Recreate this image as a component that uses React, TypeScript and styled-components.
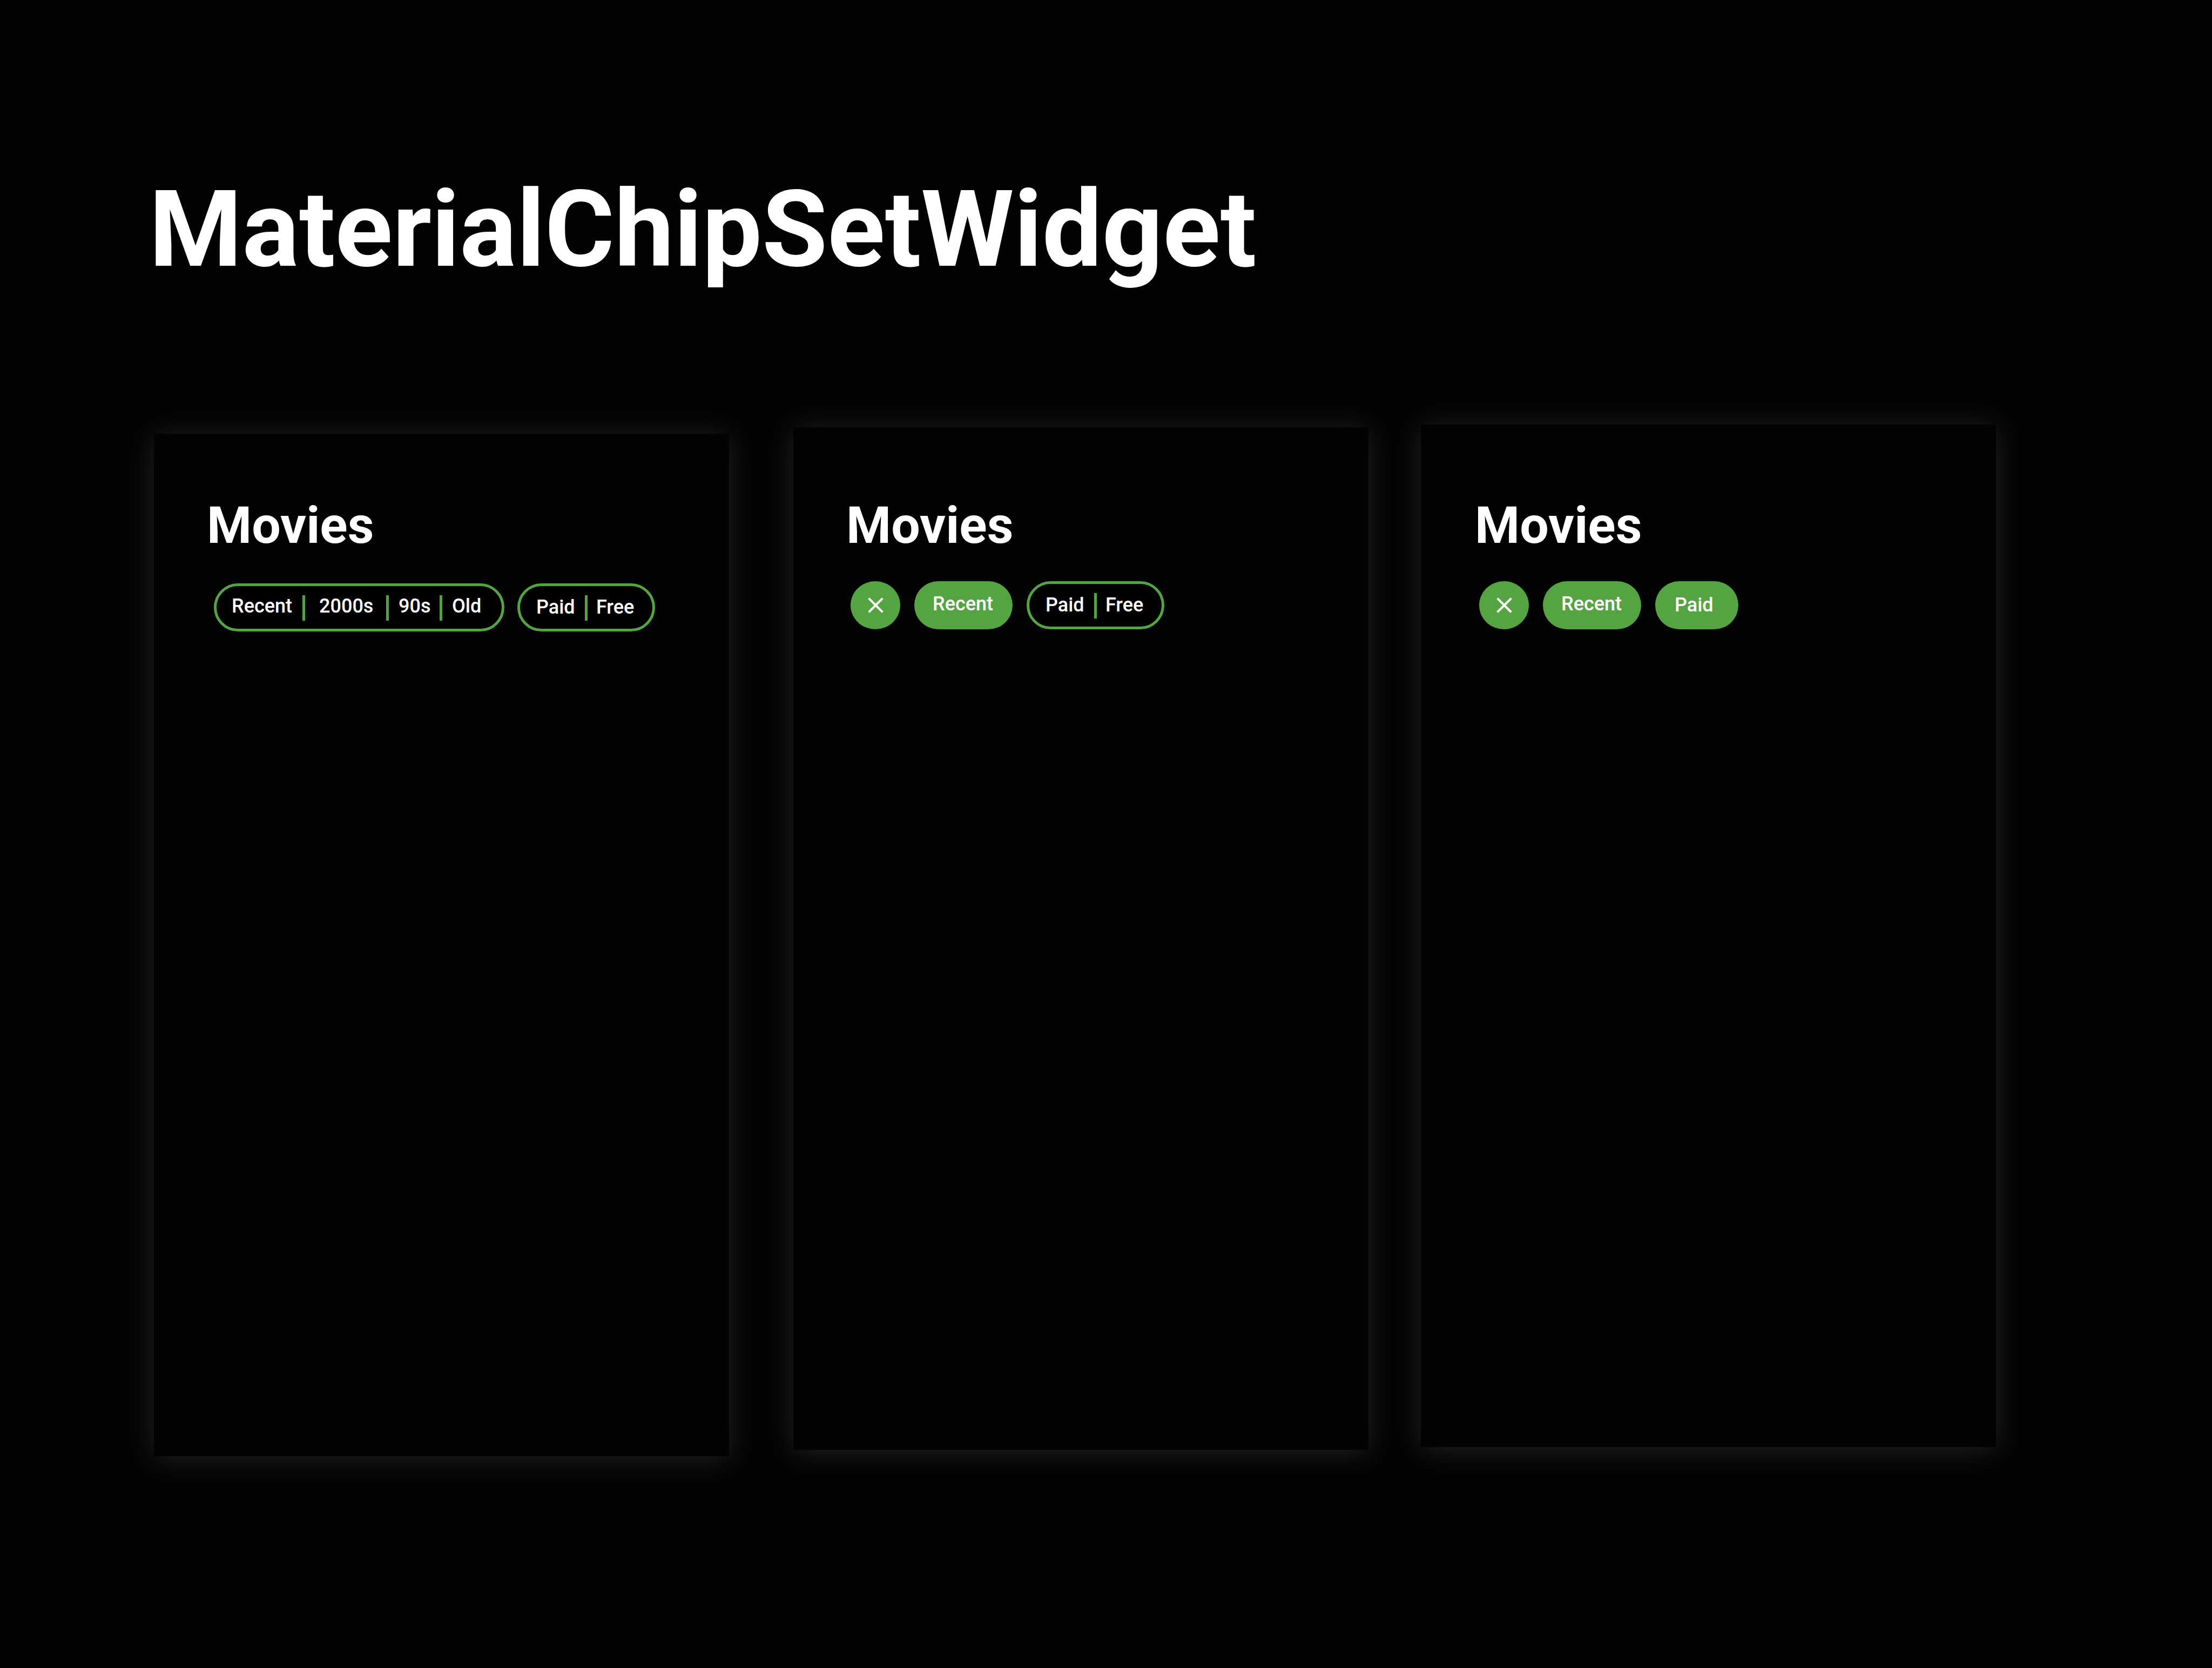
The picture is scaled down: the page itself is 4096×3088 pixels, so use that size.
import React from "react";
import styled, { createGlobalStyle } from "styled-components";

const GREEN = "#55a442";
const BACKDROP = "#030303";

const GlobalStyle = createGlobalStyle`
  *, *::before, *::after { box-sizing: border-box; }
  body {
    margin: 0;
    background: ${BACKDROP};
    color: #fff;
    font-family: Roboto, "Noto Sans", sans-serif;
  }
`;

const Page = styled.main`
  min-height: 100vh;
  padding: 326px 400px 160px 276px;
  background: ${BACKDROP};
`;

const PageTitle = styled.h1`
  margin: 0 0 280px;
  font-size: 197px;
  line-height: 197px;
  font-weight: 700;
`;

const Screens = styled.div`
  display: flex;
  align-items: flex-start;
  padding-left: 9px;
`;

/* $lift raises the frame of a screen while its content stays on the shared line. */
const Screen = styled.section<{ $lift: number; $gap: number }>`
  flex: 1 1 0;
  min-width: 0;
  aspect-ratio: 9 / 16;
  margin-top: ${(p) => -p.$lift}px;
  margin-left: ${(p) => p.$gap}px;
  background: ${BACKDROP};
  box-shadow: 0 4px 50px rgba(255, 255, 255, 0.13);
`;

const ScreenBody = styled.div<{ $lift: number; $inset: number }>`
  padding-top: ${(p) => 122 + p.$lift}px;
  padding-left: ${(p) => p.$inset}px;
`;

const ScreenTitle = styled.h2`
  margin: 0;
  font-size: 95px;
  line-height: 95px;
  font-weight: 700;
`;

const ChipSet = styled.div<{ $indent: number; $top: number; $gap: number }>`
  display: flex;
  gap: ${(p) => p.$gap}px;
  margin-top: ${(p) => p.$top}px;
  margin-left: ${(p) => p.$indent}px;
`;

const ChipGroup = styled.div`
  display: flex;
  align-items: center;
  flex: none;
  height: 89px;
  border: 5px solid ${GREEN};
  border-radius: 45px;
  background: #000;
  overflow: hidden;
`;

const Divider = styled.span`
  flex: none;
  width: 5px;
  height: 47px;
  margin-top: 2px;
  background: ${GREEN};
`;

const ChipButton = styled.button<{ $width: number; $start: number; $raised?: boolean }>`
  flex: none;
  width: ${(p) => p.$width}px;
  height: 100%;
  margin: 0;
  border: 0;
  padding: 0 0 ${(p) => (p.$raised ? 5 : 1)}px ${(p) => p.$start}px;
  background: transparent;
  color: #fff;
  font: 500 36px/42px Roboto, "Noto Sans", sans-serif;
  text-align: left;
  white-space: nowrap;
  cursor: pointer;
`;

const SelectedChip = styled(ChipButton)`
  height: 89px;
  border-radius: 45px;
  background: ${GREEN};
`;

const ClearButton = styled.button`
  display: flex;
  align-items: center;
  justify-content: center;
  flex: none;
  width: 92px;
  height: 89px;
  border: 0;
  padding: 0;
  border-radius: 50%;
  background: ${GREEN};
  color: #fff;
  cursor: pointer;
`;

type Option = { label: string; width: number; start: number; raised?: boolean };

const ERAS: Option[] = [
  { label: "Recent", width: 159, start: 28, raised: true },
  { label: "2000s", width: 150, start: 26, raised: true },
  { label: "90s", width: 94, start: 18, raised: true },
  { label: "Old", width: 110, start: 18, raised: true },
];

const PRICES: Option[] = [
  { label: "Paid", width: 120, start: 30 },
  { label: "Free", width: 120, start: 16 },
];

function Options({ name, options }: { name: string; options: Option[] }) {
  return (
    <ChipGroup role="group" aria-label={name}>
      {options.map((o, i) => (
        <React.Fragment key={o.label}>
          {i > 0 && <Divider />}
          <ChipButton type="button" $width={o.width} $start={o.start} $raised={o.raised}>
            {o.label}
          </ChipButton>
        </React.Fragment>
      ))}
    </ChipGroup>
  );
}

function Clear() {
  return (
    <ClearButton type="button" aria-label="Clear">
      <svg width="49" height="49" viewBox="0 0 24 24" fill="currentColor" aria-hidden="true">
        <path d="M19 6.41 17.59 5 12 10.59 6.41 5 5 6.41 10.59 12 5 17.59 6.41 19 12 13.41 17.59 19 19 17.59 13.41 12z" />
      </svg>
    </ClearButton>
  );
}

type MovieScreenProps = {
  lift: number;
  gap: number;
  inset: number;
  children: React.ReactNode;
};

function MovieScreen({ lift, gap, inset, children }: MovieScreenProps) {
  return (
    <Screen $lift={lift} $gap={gap}>
      <ScreenBody $lift={lift} $inset={inset}>
        <ScreenTitle>Movies</ScreenTitle>
        {children}
      </ScreenBody>
    </Screen>
  );
}

export default function App() {
  return (
    <>
      <GlobalStyle />
      <Page>
        <PageTitle>MaterialChipSetWidget</PageTitle>
        <Screens>
          <MovieScreen lift={0} gap={0} inset={98}>
            <ChipSet $indent={13} $top={60} $gap={24}>
              <Options name="Era" options={ERAS} />
              <Options name="Price" options={PRICES} />
            </ChipSet>
          </MovieScreen>
          <MovieScreen lift={12} gap={119} inset={98}>
            <ChipSet $indent={8} $top={56} $gap={26}>
              <Clear />
              <SelectedChip type="button" aria-pressed="true" $width={182} $start={34} $raised>
                Recent
              </SelectedChip>
              <Options name="Price" options={PRICES} />
            </ChipSet>
          </MovieScreen>
          <MovieScreen lift={17} gap={97} inset={100}>
            <ChipSet $indent={8} $top={56} $gap={26}>
              <Clear />
              <SelectedChip type="button" aria-pressed="true" $width={182} $start={34} $raised>
                Recent
              </SelectedChip>
              <SelectedChip type="button" aria-pressed="true" $width={154} $start={36}>
                Paid
              </SelectedChip>
            </ChipSet>
          </MovieScreen>
        </Screens>
      </Page>
    </>
  );
}
